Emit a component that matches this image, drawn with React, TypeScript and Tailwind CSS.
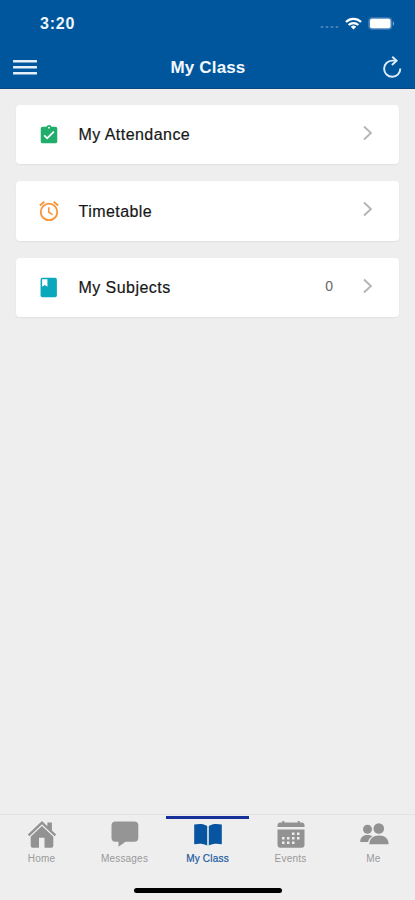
import type { ReactNode } from "react";

function StatusBar() {
  return (
    <div className="flex h-[46px] items-center pl-[40px] pr-[20px]">
      <span className="pt-[2px] text-[16px] font-bold leading-none tracking-[0.75px] text-[#eef5fc]">3:20</span>
      <div className="ml-auto flex items-center">
        <svg className="mt-2 h-[4px] w-[20px]" viewBox="0 0 20 4" fill="#4483bb">
          <rect x="0.5" y="1" width="3" height="2" rx="1" />
          <rect x="5.5" y="1" width="3" height="2" rx="1" />
          <rect x="10.5" y="1" width="3" height="2" rx="1" />
          <rect x="15.5" y="1" width="3" height="2" rx="1" />
        </svg>
        <svg className="ml-[5px] h-[13px] w-[17px]" viewBox="0 0 17 13" fill="none" stroke="#fff" strokeWidth="2.3">
          <path d="M1 5C5.2 .9 11.8 .9 16 5" />
          <path d="M3.7 8C6.4 5.4 10.6 5.4 13.3 8" />
          <path d="M8.5 12.5 5.8 9.8a3.9 3.9 0 0 1 5.4 0Z" fill="#fff" stroke="none" />
        </svg>
        <svg className="ml-[6px] h-[13px] w-[27px]" viewBox="0 0 27 13">
          <rect x="0.5" y="0.5" width="23.5" height="12" rx="3.5" fill="#4c86bd" stroke="#3674b1" />
          <rect x="2" y="1.8" width="20.5" height="9.4" rx="2" fill="#fff" />
          <path d="M25 4.500c1.300.5 1.300 3.500 0 4Z" fill="#8db5da" />
        </svg>
      </div>
    </div>
  );
}

function Header() {
  return (
    <header className="h-[89px] border-b border-[#0a4680] bg-[#00569d]">
      <StatusBar />
      <div className="flex h-[42px] items-center justify-between pl-[13px] pr-[13px]">
        <svg className="h-[16px] w-[24px]" viewBox="0 0 24 16" fill="#e4effa">
          <rect y="1" width="24" height="2.4" rx=".5" />
          <rect y="7" width="24" height="2.4" rx=".5" />
          <rect y="13" width="24" height="2.4" rx=".5" />
        </svg>
        <h1 className="pr-[3px] text-[17px] font-bold leading-none tracking-[0.15px] text-[#f5f9ff]">My Class</h1>
        <svg className="h-[24px] w-[20px]" viewBox="0 0 20 24" fill="none" stroke="#dfedfa" strokeWidth="1.9">
          <path d="M18.3 13.5A8.100 8.100 0 1 1 10.200 5.600H14.500" />
          <path d="m10.300 1.700 4.300 4-4.700 4.300" />
        </svg>
      </div>
    </header>
  );
}

const attendance = (
  <svg className="mt-[2px] h-[22px] w-[22px]" viewBox="0 0 24 24">
    <path fill="#21ad6b" d="M19 3h-4.200C14.400 1.800 13.300 1 12 1s-2.400.8-2.800 2H5c-1.100 0-2 .9-2 2v14c0 1.100.9 2 2 2h14c1.100 0 2-.9 2-2V5c0-1.100-.9-2-2-2Z" />
    <circle cx="12" cy="4" r="1" fill="#fff" />
    <path fill="#fff" d="m10 17-4-4 1.400-1.400L10 14.200l6.600-6.600L18 9Z" />
  </svg>
);

const clock = (
  <svg className="mt-px h-[22px] w-[22px]" viewBox="0 0 24 24" fill="none" stroke="#f8943a" strokeWidth="2">
    <circle cx="12" cy="13" r="9" />
    <path d="m2 6 4.900-4.100M17.100 1.900 22 6" />
    <path d="M11.800 8v5.400l4.200 2.500" strokeWidth="1.700" />
  </svg>
);

const book = (
  <svg className="h-[22px] w-[22px]" viewBox="0 0 24 24">
    <rect x="2.800" y="2" width="17.800" height="21.300" rx="2" fill="#0ba8bd" />
    <path fill="#fff" d="M4.500 3.500h5.800v8.200L7.400 9.900l-2.900 1.800Z" />
  </svg>
);

function MenuCard({ icon, label, count }: { icon: ReactNode; label: string; count?: number }) {
  return (
    <li className="flex h-[59.5px] items-center rounded-[4px] bg-white pl-[21.5px] pr-[26px] shadow-[0_1px_2px_rgba(0,0,0,0.06)]">
      {icon}
      <span className="ml-[19px] mt-[2px] text-[16px] leading-5 tracking-[0.45px] text-[#171717] [-webkit-text-stroke:0.2px_#171717]">
        {label}
      </span>
      {count !== undefined && (
        <span className="mb-[2px] ml-auto mr-[30px] text-[14px] leading-5 text-[#666]">{count}</span>
      )}
      <svg
        className={`mb-[3px] h-[16px] w-[10px] ${count === undefined ? "ml-auto" : ""}`}
        viewBox="0 0 10 16"
        fill="none"
        stroke="#b5b5b5"
        strokeWidth="1.9"
      >
        <path d="m1 1.500 6.900 6.500L1 14.500" />
      </svg>
    </li>
  );
}

const home = (
  <svg className="h-[30px] w-[30px]" viewBox="0 0 30 30" fill="#929292">
    <path d="M15 1 .8 14.500l1.600 1.700L15 4.300l12.600 11.900 1.600-1.700-4.300-4.100V2.500h-4.500v3.700Z" />
    <path d="M15 6 3.700 16.700v9.100q0 2 2 2h6.300v-10h5.500v10h6.800q2 0 2-2v-9.100Z" />
  </svg>
);

const message = (
  <svg className="h-[30px] w-[30px]" viewBox="0 0 30 30" fill="#959595">
    <path d="M5.500 1.500h18.800a4 4 0 0 1 4 4v12.300a4 4 0 0 1-4 4H15.500l-7 5v-5h-3a4 4 0 0 1-4-4V5.500a4 4 0 0 1 4-4Z" />
  </svg>
);

const openBook = (
  <svg className="h-[30px] w-[30px]" viewBox="0 0 30 30" fill="#0755a0">
    <path d="M1.200 4.500C6.500 3.500 11.200 3.800 14.200 6v19.500C10.500 23.500 6 23.300 1.200 24.200Z" />
    <path d="M28.800 4.500C23.500 3.500 18.800 3.800 15.800 6v19.500C19.500 23.500 24 23.300 28.800 24.200Z" />
  </svg>
);

const calendar = (
  <svg className="h-[30px] w-[30px]" viewBox="0 0 30 30">
    <path fill="#929292" d="M1.500 7V5.500a3 3 0 0 1 3-3h1.800V1h2v1.500h13.400V1h2v1.500h1.800a3 3 0 0 1 3 3V7Z" />
    <path fill="#929292" d="M1.500 9.500h27v15.200a3 3 0 0 1-3 3h-21a3 3 0 0 1-3-3Z" />
    <path
      fill="#eee"
      d="M16 12.500h2.500V15H16ZM21 12.500h2.500V15H21ZM6 17h2.500v2.500H6ZM11 17h2.500v2.500H11ZM16 17h2.500v2.500H16ZM21 17h2.500v2.500H21ZM6 21.500h2.500V24H6ZM11 21.500h2.500V24H11ZM16 21.500h2.500V24H16Z"
    />
  </svg>
);

const people = (
  <svg className="h-[30px] w-[30px]" viewBox="0 0 30 30" fill="#929292">
    <circle cx="8.500" cy="9.300" r="4.500" />
    <circle cx="19.800" cy="8.500" r="5.300" />
    <path d="M1.200 22c0-4.700 3-7 7.200-7 2 0 3.600.4 5 1.200-2.600 1.500-3.800 3.300-4.300 5.800Z" />
    <path d="M10.300 24.300c0-5.500 4-8.800 9.800-8.800s9.500 3.300 9.500 8.800Z" />
  </svg>
);

const tabs = [
  { label: "Home", icon: home },
  { label: "Messages", icon: message },
  { label: "My Class", icon: openBook, active: true },
  { label: "Events", icon: calendar },
  { label: "Me", icon: people },
];

function TabBar() {
  return (
    <nav className="h-[86px] border-t border-[#e2e2e2]">
      <div className="grid h-[54px] grid-cols-5">
        {tabs.map(({ label, icon, active }) => (
          <div
            key={label}
            className={`flex flex-col items-center border-t-[3px] ${
              active ? "mt-px border-[#16329a] pt-[1px] text-[#1958a0]" : "border-transparent pt-[1.5px] text-[#999]"
            }`}
          >
            {icon}
            <span
              className={`text-[10px] leading-[18px] ${
                active ? "tracking-[0.2px] [-webkit-text-stroke:0.2px_#1958a0]" : "tracking-[0.2px]"
              }`}
            >
              {label}
            </span>
          </div>
        ))}
      </div>
      <div className="mx-auto mt-[18.5px] h-[5px] w-[148px] rounded-full bg-black" />
    </nav>
  );
}

export default function App() {
  return (
    <div className="flex h-[900px] w-[415px] flex-col overflow-hidden bg-[#eee] font-['Liberation_Sans',Arial,sans-serif]">
      <Header />
      <main className="flex-1 px-[16px] pt-[15.5px]">
        <ul className="flex flex-col gap-[17px]">
          <MenuCard icon={attendance} label="My Attendance" />
          <MenuCard icon={clock} label="Timetable" />
          <MenuCard icon={book} label="My Subjects" count={0} />
        </ul>
      </main>
      <TabBar />
    </div>
  );
}
